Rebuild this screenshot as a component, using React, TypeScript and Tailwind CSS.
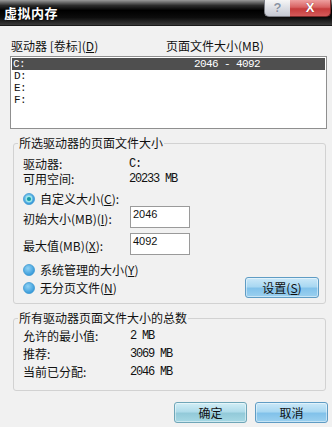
import React from "react";

const mono = "font-['Liberation_Mono',monospace] text-[12px] tracking-[-1.2px]";
const monoList = "font-['Liberation_Mono',monospace] text-[11px] tracking-[-0.6px]";

function Radio({ checked }: { checked?: boolean }) {
  return (
    <svg width="12" height="12" viewBox="0 0 12 12" className="shrink-0">
      <defs>
        <radialGradient id={checked ? "rg1" : "rg0"} cx="40%" cy="35%" r="70%">
          <stop offset="0%" stopColor="#8fd2f4" />
          <stop offset="100%" stopColor="#2f95d8" />
        </radialGradient>
      </defs>
      <circle cx="6" cy="6" r="5.5" fill={`url(#${checked ? "rg1" : "rg0"})`} stroke="#3c98d0" strokeWidth="0.8" />
      {checked && (
        <>
          <circle cx="6" cy="6" r="3.4" fill="#9fe6ea" />
          <circle cx="6" cy="6" r="2.1" fill="#189aa6" />
        </>
      )}
    </svg>
  );
}

function Btn({ children, w = "w-[74px]", tone = "blue" }: { children: React.ReactNode; w?: string; tone?: "blue" | "teal" }) {
  const bg =
    tone === "teal"
      ? "bg-[linear-gradient(to_bottom,#d2eef6_0%,#b0dcea_45%,#93cad9_55%,#a6d8e4_100%)] border-[#6fa6b8]"
      : "bg-[linear-gradient(to_bottom,#cbe8f8_0%,#a9d8f2_45%,#82c2ea_55%,#9bd0ef_100%)] border-[#5f9cc4]";
  return (
    <div className={`${w} h-[21px] rounded-[3px] border ${bg} flex items-center justify-center text-[12px] leading-[14px] text-[#111] shadow-[inset_0_0_0_1px_rgba(255,255,255,0.45)]`}>
      {children}
    </div>
  );
}

export default function App() {
  return (
    <div className="w-[332px] h-[427px] bg-[#f1f1f1] flex flex-col overflow-hidden font-['Noto_Sans_CJK_SC','Liberation_Sans',sans-serif] text-[#111]">
      {/* Title bar */}
      <div className="h-[26px] shrink-0 flex justify-between items-start bg-[linear-gradient(to_bottom,#9a9a9a_0%,#2c2c2c_22%,#000_42%,#0c0c0c_70%,#3a3a3a_100%)] border-b border-[#1a1a1a]">
        <div className="pl-[4px] pt-[5px] text-[13px] leading-[16px] font-bold text-white tracking-[0.5px] [text-shadow:0_0_2px_#000]">
          虚拟内存
        </div>
        <div className="flex mr-[1px]">
          <div className="w-[26px] h-[17px] rounded-bl-[5px] border-l border-b border-[#7d7f86] bg-[linear-gradient(to_bottom,#f6f6f6_0%,#dcdee4_50%,#c6c9d2_100%)] flex items-center justify-center font-['Liberation_Sans',sans-serif] text-[13px] leading-[16px] font-bold text-[#8a93a3] [text-shadow:0_0_1px_#fff]">
            ?
          </div>
          <div className="w-[41px] h-[17px] rounded-br-[5px] border-b border-r border-[#7a2a2a] bg-[linear-gradient(to_bottom,#eea0a0_0%,#d86262_45%,#c63c3c_55%,#d45a5a_100%)] flex items-center justify-center font-['Liberation_Sans',sans-serif] text-[13px] leading-[16px] font-bold text-white [text-shadow:0_0_1px_#7a1c1c]">
            X
          </div>
        </div>
      </div>

      {/* Body */}
      <div className="flex flex-col pl-[10px]">
        <div className="mt-[13px] flex h-[14px] text-[12px] leading-[14px]">
          <span className="w-[156px] pl-[1px]">
            驱动器 [卷标](<u>D</u>)
          </span>
          <span>页面文件大小(MB)</span>
        </div>

        {/* List box */}
        <div className="mt-[3px] w-[317px] h-[73px] border border-[#8f8f8f] bg-white flex flex-col">
          <div className={`mx-[1px] mt-[1px] h-[12px] bg-[#4f4f4f] text-white flex items-center ${monoList} leading-[12px]`}>
            <span className="w-[182px] pl-[1px]">C:</span>
            <span className="whitespace-pre">2046 - 4092</span>
          </div>
          {["D:", "E:", "F:"].map((d) => (
            <div key={d} className={`mx-[1px] h-[12px] pl-[2px] flex items-center ${monoList} leading-[12px]`}>
              {d}
            </div>
          ))}
        </div>

        {/* Group 1 */}
        <div className="relative mt-[14px] ml-[3px] w-[313px] h-[161px] border border-[#d2d2d2] rounded-[3px] flex flex-col pl-[9px] pr-[6px]">
          <span className="absolute left-[4px] top-[-8px] px-[1px] bg-[#f1f1f1] text-[12px] leading-[14px]">
            所选驱动器的页面文件大小
          </span>
          <div className="mt-[12px] flex h-[15px] items-center text-[12px] leading-[14px]">
            <span className="w-[106px]">驱动器:</span>
            <span className={mono}>C:</span>
          </div>
          <div className="flex h-[15px] items-center text-[12px] leading-[14px]">
            <span className="w-[106px]">可用空间:</span>
            <span className={`${mono} whitespace-pre`}>20233 MB</span>
          </div>
          <div className="mt-[5px] flex h-[15px] items-center gap-[5px] text-[12px] leading-[14px]">
            <Radio checked />
            <span>
              自定义大小(<u>C</u>):
            </span>
          </div>
          <div className="flex h-[22px] items-center text-[12px] leading-[14px]">
            <span className="w-[107px] pt-[3px]">
              初始大小(MB)(<u>I</u>):
            </span>
            <div className="w-[60px] h-[22px] border border-[#9a9a9a] bg-white pl-[2px] pt-[1px] font-['Liberation_Sans',sans-serif] text-[11px] leading-[13px]">
              2046
            </div>
          </div>
          <div className="mt-[5px] flex h-[22px] items-center text-[12px] leading-[14px]">
            <span className="w-[107px] pt-[3px]">
              最大值(MB)(<u>X</u>):
            </span>
            <div className="w-[60px] h-[22px] border border-[#9a9a9a] bg-white pl-[2px] pt-[1px] font-['Liberation_Sans',sans-serif] text-[11px] leading-[13px]">
              4092
            </div>
          </div>
          <div className="mt-[7px] flex h-[15px] items-center gap-[5px] text-[12px] leading-[14px]">
            <Radio />
            <span>
              系统管理的大小(<u>Y</u>)
            </span>
          </div>
          <div className="flex h-[21px] items-center justify-between text-[12px] leading-[14px]">
            <div className="flex items-center gap-[5px]">
              <Radio />
              <span>
                无分页文件(<u>N</u>)
              </span>
            </div>
            <Btn>
              设置(<u>S</u>)
            </Btn>
          </div>
        </div>

        {/* Group 2 */}
        <div className="relative mt-[14px] ml-[3px] w-[313px] h-[73px] border border-[#d2d2d2] rounded-[3px] flex flex-col pl-[9px]">
          <span className="absolute left-[4px] top-[-8px] px-[1px] bg-[#f1f1f1] text-[12px] leading-[14px]">
            所有驱动器页面文件大小的总数
          </span>
          <div className="mt-[8px] flex h-[18px] items-center text-[12px] leading-[14px]">
            <span className="w-[107px]">允许的最小值:</span>
            <span className={`${mono} whitespace-pre`}>2 MB</span>
          </div>
          <div className="flex h-[18px] items-center text-[12px] leading-[14px]">
            <span className="w-[107px]">推荐:</span>
            <span className={`${mono} whitespace-pre`}>3069 MB</span>
          </div>
          <div className="flex h-[18px] items-center text-[12px] leading-[14px]">
            <span className="w-[107px]">当前已分配:</span>
            <span className={`${mono} whitespace-pre`}>2046 MB</span>
          </div>
        </div>

        {/* Bottom buttons */}
        <div className="mt-[11px] flex justify-end gap-[8px] pr-[4px]">
          <Btn w="w-[73px]" tone="teal">确定</Btn>
          <Btn w="w-[73px]">取消</Btn>
        </div>
      </div>
    </div>
  );
}
